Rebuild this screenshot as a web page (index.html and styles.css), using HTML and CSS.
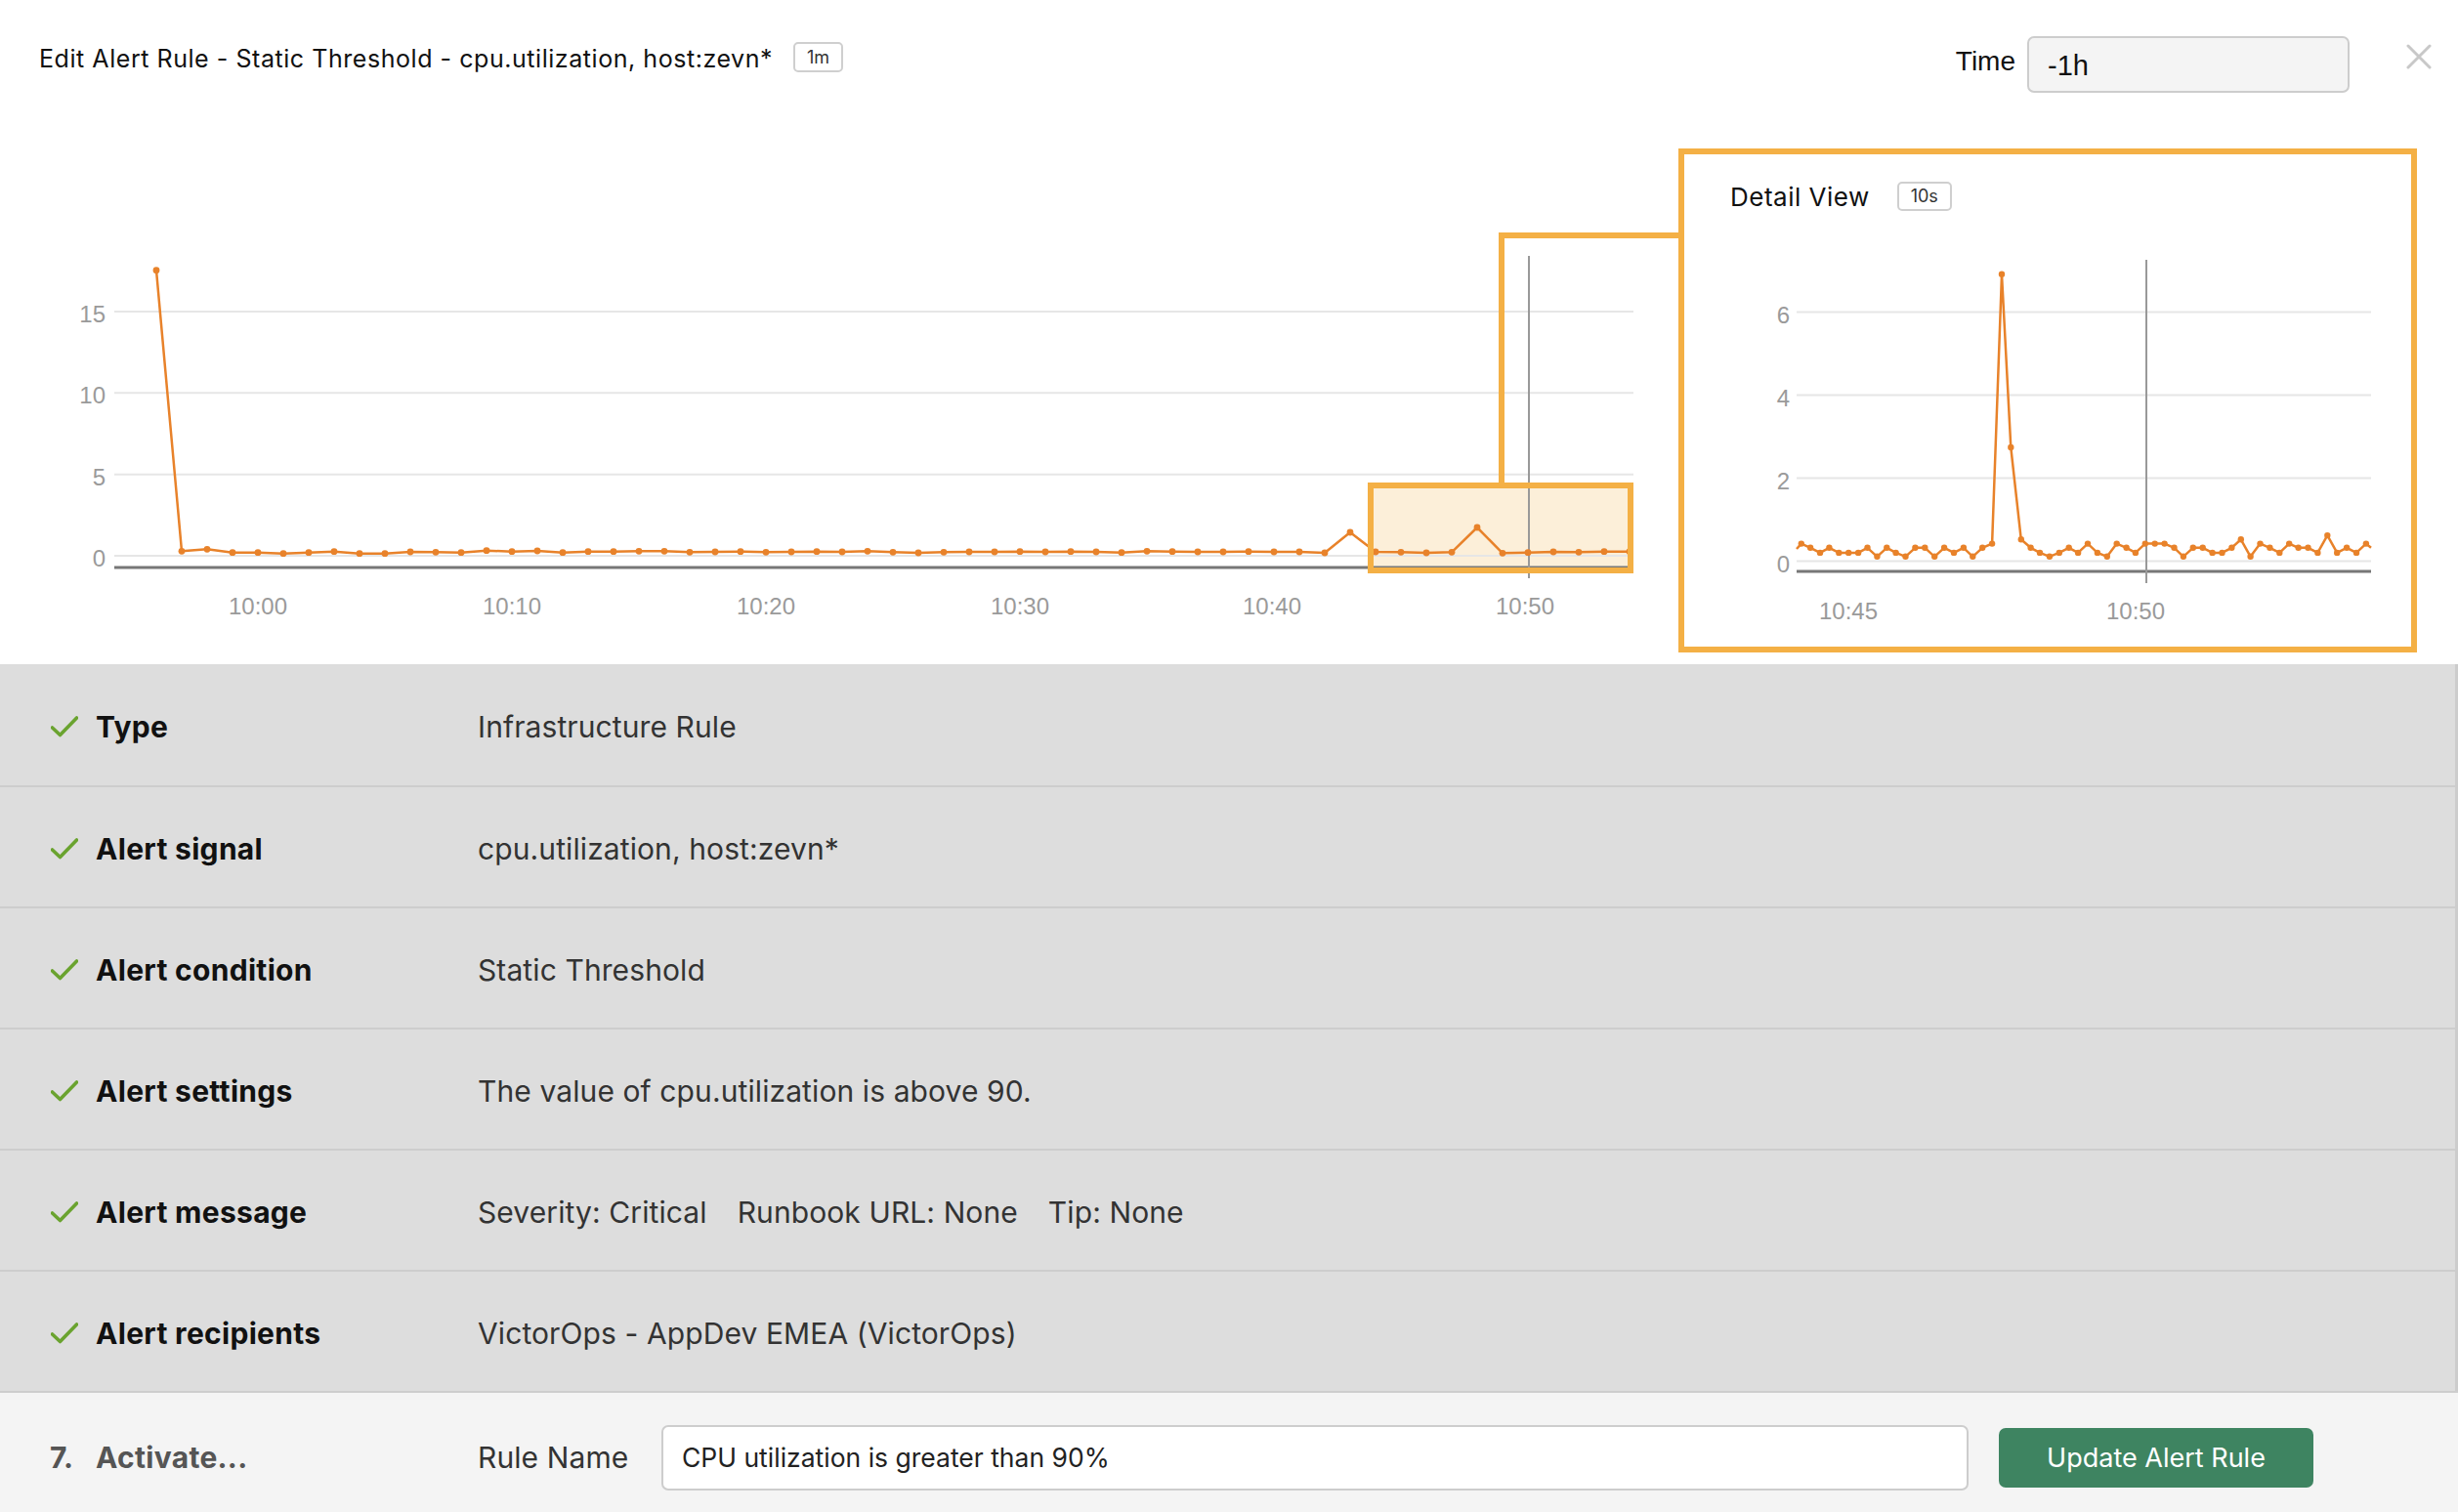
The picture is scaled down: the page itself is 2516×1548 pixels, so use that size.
FILE: index.html
```html
<!DOCTYPE html>
<html lang="en">
<head>
<meta charset="utf-8">
<title>Edit Alert Rule</title>
<link rel="stylesheet" href="styles.css">
</head>
<body>
<header class="header">
  <div class="title">Edit Alert Rule - Static Threshold - cpu.utilization, host:zevn*</div>
  <div class="res-badge">1m</div>
  <div class="spacer"></div>
  <div class="time-label">Time</div>
  <div class="time-input">-1h</div>
  <svg class="close" viewBox="0 0 26 26"><path d="M2 2 L24 24 M24 2 L2 24" stroke="#c8c8c8" stroke-width="3" fill="none" stroke-linecap="round"/></svg>
</header>

<section class="charts">
  <svg class="main-chart" viewBox="0 95 1718 585">
    <defs>
      <marker id="dot" viewBox="-5 -5 10 10" markerWidth="10" markerHeight="10" markerUnits="userSpaceOnUse" refX="0" refY="0">
        <circle r="3.4" fill="#e8822a"/>
      </marker>
    </defs>
    <rect x="1403" y="497" width="266" height="87" fill="#fcefd9"/>
    <g stroke="#e6e6e6" stroke-width="2">
      <line x1="117" y1="319" x2="1672" y2="319"/>
      <line x1="117" y1="402.3" x2="1672" y2="402.3"/>
      <line x1="117" y1="485.7" x2="1672" y2="485.7"/>
      <line x1="117" y1="569" x2="1672" y2="569"/>
    </g>
    <line x1="117" y1="581" x2="1672" y2="581" stroke="#777" stroke-width="3"/>
    <g class="axis-text" text-anchor="end">
      <text x="108" y="330">15</text>
      <text x="108" y="413">10</text>
      <text x="108" y="497">5</text>
      <text x="108" y="580">0</text>
    </g>
    <g class="axis-text" text-anchor="middle">
      <text x="264" y="629">10:00</text>
      <text x="524" y="629">10:10</text>
      <text x="784" y="629">10:20</text>
      <text x="1044" y="629">10:30</text>
      <text x="1302" y="629">10:40</text>
      <text x="1561" y="629">10:50</text>
    </g>
    <line x1="1565" y1="262" x2="1565" y2="592" stroke="#999" stroke-width="2"/>
    <polyline class="series" points="160,276.7 186,564.3 212,562.3 238,565.7 264,565.7 290,566.7 316,565.7 342,564.7 368,566.7 394,566.7 420,565 446,565.3 472,565.7 498,563.7 524,564.7 550,564 576,565.7 602,564.7 628,564.7 654,564.3 680,564.3 706,565.3 732,565 758,564.7 784,565.3 810,565 836,564.7 862,565 888,564.3 914,565.3 940,566 966,565.3 992,565 1018,565 1044,564.7 1070,565 1096,564.7 1122,565 1148,565.7 1174,564.3 1200,564.7 1226,565 1252,565 1278,564.7 1304,565 1330,565 1356,566 1382,545 1408,565 1434,565.3 1460,566 1486,565.3 1512,540 1538,566.3 1564,565.7 1590,565 1616,565.3 1642,564.7 1668,564.7"/>
    <rect x="1403" y="497" width="266" height="87" fill="none" stroke="#f4b045" stroke-width="6"/>
    <polyline points="1537,497 1537,241 1718,241" fill="none" stroke="#f4b045" stroke-width="6"/>
  </svg>

  <div class="detail">
    <div class="detail-head">
      <span class="detail-title">Detail View</span>
      <span class="detail-badge">10s</span>
    </div>
    <svg class="detail-chart" viewBox="1724 230 744 428">
      <defs>
        <marker id="dot2" viewBox="-5 -5 10 10" markerWidth="10" markerHeight="10" markerUnits="userSpaceOnUse" refX="0" refY="0">
          <circle r="3.2" fill="#e8822a"/>
        </marker>
      </defs>
      <g stroke="#e6e6e6" stroke-width="2">
        <line x1="1839" y1="319.5" x2="2427" y2="319.5"/>
        <line x1="1839" y1="404.5" x2="2427" y2="404.5"/>
        <line x1="1839" y1="489.5" x2="2427" y2="489.5"/>
        <line x1="1839" y1="574.5" x2="2427" y2="574.5"/>
      </g>
      <line x1="1839" y1="585" x2="2427" y2="585" stroke="#777" stroke-width="3"/>
      <g class="axis-text" text-anchor="end">
        <text x="1832" y="331">6</text>
        <text x="1832" y="416">4</text>
        <text x="1832" y="501">2</text>
        <text x="1832" y="586">0</text>
      </g>
      <g class="axis-text" text-anchor="middle">
        <text x="1892" y="634">10:45</text>
        <text x="2186" y="634">10:50</text>
      </g>
      <line x1="2197" y1="266" x2="2197" y2="597" stroke="#999" stroke-width="2"/>
      <polyline class="series2" points="1839,562 1843.8,556.6 1853.1,560.8 1863,565.9 1872.4,560.8 1882.3,565.9 1892.2,565.9 1902.1,565.9 1911.5,560.8 1921.4,569.8 1931.3,560.8 1940.6,565.9 1950.5,569.8 1960.4,560.8 1970.3,560.8 1980.2,569.8 1990.1,560.8 2000,565.9 2009.9,560.8 2019.3,569.8 2029.2,560.8 2039.1,556.6 2049,280.8 2058.3,458 2068.8,552.3 2078.6,560.8 2088,565.9 2097.9,569.8 2107.8,565.9 2117.7,560.8 2127.1,565.9 2137,556.6 2146.9,565.9 2156.8,569.8 2166.7,556.6 2176.6,560.8 2185.9,565.9 2195.8,556.6 2205.7,556.6 2215.6,556.6 2225.5,560.8 2234.9,569.8 2244.8,560.8 2254.7,560.8 2264.6,565.9 2274.5,565.9 2284.4,560.8 2293.8,552.3 2303.6,569.8 2313.5,556.6 2323.4,560.8 2333.3,565.9 2343.2,556.6 2352.6,560.8 2362.5,560.8 2372.4,565.9 2382.3,548.1 2392.2,565.9 2402.1,560.8 2412,565.9 2421.9,556.6 2427,560.8"/>
    </svg>
  </div>
</section>

<section class="rows">
  <div class="row">
    <div class="row-label"><svg class="check" viewBox="0 0 28 22"><path d="M1.5 12 L9.5 19.5 L26.5 2" fill="none" stroke="#6aa32f" stroke-width="3.6" stroke-linecap="round" stroke-linejoin="round"/></svg>Type</div>
    <div class="row-value">Infrastructure Rule</div>
  </div>
  <div class="row">
    <div class="row-label"><svg class="check" viewBox="0 0 28 22"><path d="M1.5 12 L9.5 19.5 L26.5 2" fill="none" stroke="#6aa32f" stroke-width="3.6" stroke-linecap="round" stroke-linejoin="round"/></svg>Alert signal</div>
    <div class="row-value">cpu.utilization, host:zevn*</div>
  </div>
  <div class="row">
    <div class="row-label"><svg class="check" viewBox="0 0 28 22"><path d="M1.5 12 L9.5 19.5 L26.5 2" fill="none" stroke="#6aa32f" stroke-width="3.6" stroke-linecap="round" stroke-linejoin="round"/></svg>Alert condition</div>
    <div class="row-value">Static Threshold</div>
  </div>
  <div class="row">
    <div class="row-label"><svg class="check" viewBox="0 0 28 22"><path d="M1.5 12 L9.5 19.5 L26.5 2" fill="none" stroke="#6aa32f" stroke-width="3.6" stroke-linecap="round" stroke-linejoin="round"/></svg>Alert settings</div>
    <div class="row-value">The value of cpu.utilization is above 90.</div>
  </div>
  <div class="row">
    <div class="row-label"><svg class="check" viewBox="0 0 28 22"><path d="M1.5 12 L9.5 19.5 L26.5 2" fill="none" stroke="#6aa32f" stroke-width="3.6" stroke-linecap="round" stroke-linejoin="round"/></svg>Alert message</div>
    <div class="row-value"><span class="msg-part">Severity: Critical</span><span class="msg-part">Runbook URL: None</span><span class="msg-part">Tip: None</span></div>
  </div>
  <div class="row">
    <div class="row-label"><svg class="check" viewBox="0 0 28 22"><path d="M1.5 12 L9.5 19.5 L26.5 2" fill="none" stroke="#6aa32f" stroke-width="3.6" stroke-linecap="round" stroke-linejoin="round"/></svg>Alert recipients</div>
    <div class="row-value">VictorOps - AppDev EMEA (VictorOps)</div>
  </div>
</section>

<footer class="footer">
  <div class="step"><span class="step-num">7.</span><span>Activate...</span></div>
  <div class="rule-label">Rule Name</div>
  <div class="rule-input">CPU utilization is greater than 90%</div>
  <div class="update-btn">Update Alert Rule</div>
</footer>
</body>
</html>
```

FILE: styles.css
```css
* { box-sizing: border-box; }
html, body { margin: 0; padding: 0; }
body {
  width: 2516px;
  height: 1548px;
  overflow: hidden;
  background: #ffffff;
  font-family: Inter, "Noto Sans", "Liberation Sans", sans-serif;
  color: #111;
}

/* header */
.header {
  display: flex;
  align-items: flex-start;
  height: 95px;
  padding: 0 27px 0 40px;
}
.title {
  margin-top: 45px;
  font-size: 25px;
  letter-spacing: 0.55px;
  line-height: 30px;
  color: #111;
  white-space: nowrap;
}
.res-badge {
  margin-top: 43px;
  margin-left: 21px;
  width: 51px;
  height: 31px;
  border: 2px solid #cfcfcf;
  border-radius: 5px;
  font-size: 18px;
  line-height: 27px;
  text-align: center;
  color: #333;
}
.spacer { flex: 1; }
.time-label {
  margin-top: 46px;
  margin-right: 12px;
  font-family: "Liberation Sans", Arial, sans-serif;
  font-size: 28px;
  line-height: 34px;
  color: #111;
}
.time-input {
  margin-top: 37px;
  width: 330px;
  height: 58px;
  border: 2px solid #cdcdcd;
  border-radius: 7px;
  background: #f4f4f4;
  font-family: "Liberation Sans", Arial, sans-serif;
  font-size: 29px;
  line-height: 56px;
  padding-left: 19px;
  color: #111;
}
.close {
  margin-top: 45px;
  margin-left: 58px;
  width: 26px;
  height: 26px;
}

/* charts */
.charts {
  display: flex;
  height: 585px;
}
.main-chart {
  flex: none;
  display: block;
  width: 1718px;
  height: 585px;
}
.axis-text {
  font-family: "Liberation Sans", Arial, sans-serif;
  font-size: 24px;
  fill: #9a9a9a;
}
.series, .series2 {
  fill: none;
  stroke: #e8822a;
  stroke-width: 2.5;
  stroke-linejoin: round;
}
.series { marker-start: url(#dot); marker-mid: url(#dot); marker-end: url(#dot); }
.series2 { marker-mid: url(#dot2); }
.detail {
  flex: none;
  margin-top: 57px;
  width: 756px;
  height: 516px;
  border: 6px solid #f4b045;
  display: flex;
  flex-direction: column;
}
.detail-head {
  height: 72px;
  padding: 14px 0 0 47px;
  display: flex;
  align-items: center;
}
.detail-title {
  font-size: 26px;
  letter-spacing: 0.5px;
  color: #111;
}
.detail-badge {
  margin-left: 28px;
  width: 56px;
  height: 30px;
  border: 2px solid #cfcfcf;
  border-radius: 5px;
  font-size: 18px;
  line-height: 26px;
  text-align: center;
  color: #333;
}
.detail-chart {
  display: block;
  width: 744px;
  height: 428px;
}

/* summary rows */
.rows {
  border-right: 3px solid #cccccc;
}
.row {
  display: flex;
  align-items: center;
  height: 124px;
  padding-top: 4px;
  background: #dddddd;
}
.row + .row {
  border-top: 2px solid #cdcdcd;
}
.row-label {
  width: 489px;
  flex: none;
  display: flex;
  align-items: center;
  padding-left: 52px;
  font-size: 30px;
  letter-spacing: 0.3px;
  font-weight: 700;
  color: #111;
}
.check {
  width: 28px;
  height: 22px;
  margin-right: 18px;
  flex: none;
}
.row-value {
  font-size: 30px;
  letter-spacing: 0.1px;
  color: #333;
}
.msg-part { margin-right: 31px; }

/* footer */
.footer {
  height: 124px;
  background: #f4f4f4;
  border-top: 2px solid #cdcdcd;
  display: flex;
  align-items: center;
  padding: 10px 0 0 51px;
}
.step {
  width: 438px;
  flex: none;
  font-size: 30px;
  letter-spacing: 0.3px;
  font-weight: 700;
  color: #555;
}
.step-num {
  display: inline-block;
  width: 47px;
}
.rule-label {
  width: 188px;
  flex: none;
  font-size: 30px;
  letter-spacing: 0.1px;
  color: #333;
}
.rule-input {
  width: 1338px;
  height: 67px;
  flex: none;
  background: #fff;
  border: 2px solid #cdcdcd;
  border-radius: 7px;
  padding-left: 19px;
  font-size: 26.5px;
  line-height: 63px;
  color: #222;
}
.update-btn {
  margin-left: 31px;
  width: 322px;
  height: 61px;
  flex: none;
  background: #3e8461;
  color: #fff;
  border-radius: 7px;
  font-size: 27px;
  display: flex;
  align-items: center;
  justify-content: center;
}
```
